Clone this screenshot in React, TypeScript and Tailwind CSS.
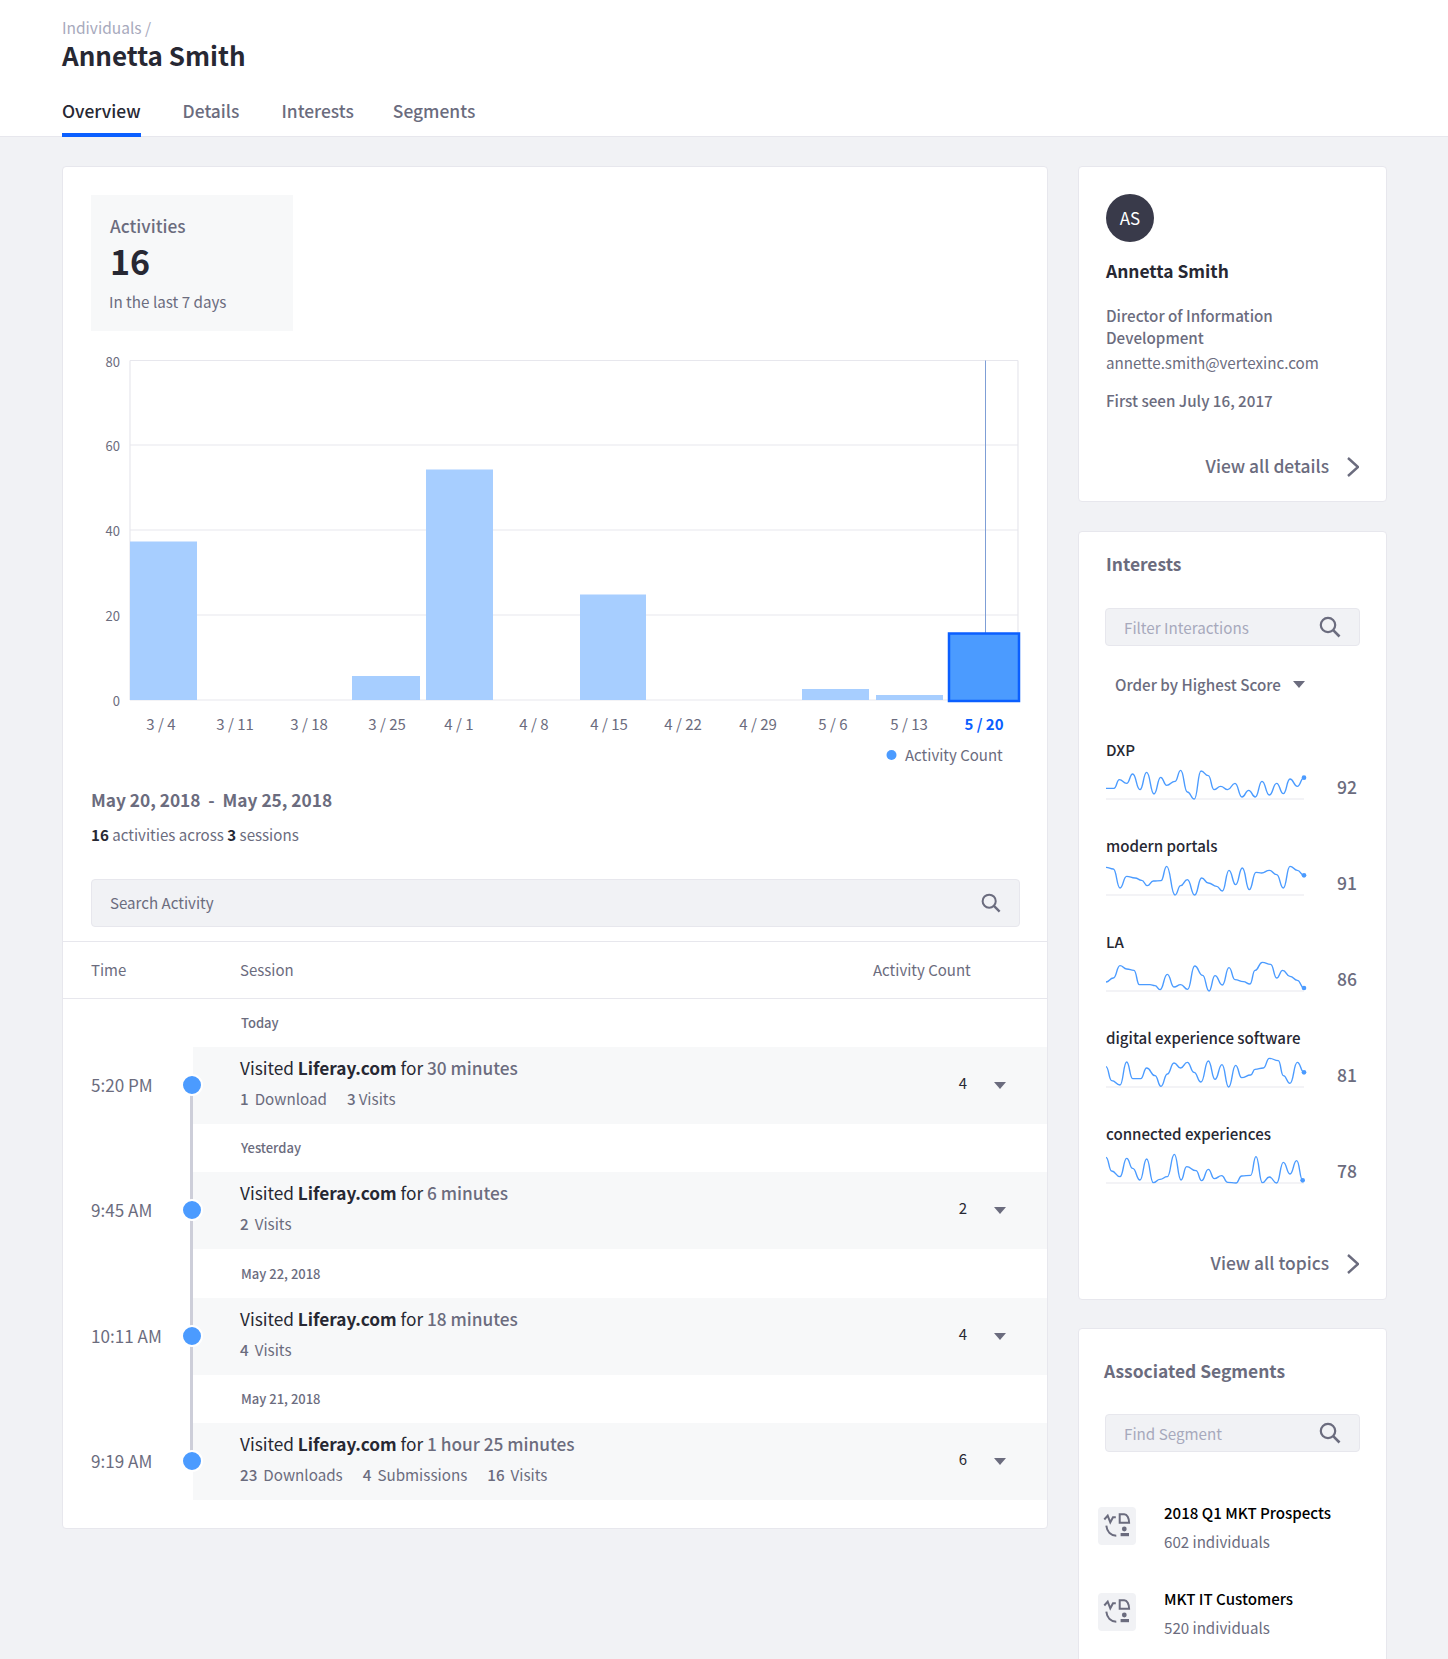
type Pt = [number, number];

const sparks: { name: string; score: number; base: number; points: Pt[] }[] = [
  {
    name: "DXP",
    score: 92,
    base: 778,
    points: [[138,746],[162,746],[178,720],[200,731],[218,703],[240,750],[260,698],[282,763],[302,713],[320,737],[345,725],[362,692],[382,757],[403,778],[423,694],[445,708],[462,750],[482,740],[503,750],[525,731],[546,772],[566,752],[586,772],[606,725],[628,766],[650,731],[670,762],[690,718],[712,740],[732,714]],
  },
  {
    name: "modern portals",
    score: 91,
    base: 196,
    points: [[138,113],[160,118],[180,175],[200,140],[225,145],[245,152],[262,168],[280,154],[303,153],[320,110],[345,196],[362,168],[382,150],[404,196],[425,145],[445,160],[470,170],[487,184],[507,122],[527,165],[547,115],[568,180],[588,128],[605,130],[628,122],[650,135],[670,175],[690,110],[712,122],[732,137]],
  },
  {
    name: "LA",
    score: 86,
    base: 484,
    points: [[138,457],[160,445],[180,408],[200,418],[222,422],[238,465],[270,465],[285,468],[300,480],[322,434],[342,472],[362,465],[383,479],[404,409],[428,437],[447,484],[465,438],[487,466],[507,414],[525,450],[550,456],[570,463],[585,422],[607,398],[632,404],[650,445],[668,422],[690,440],[712,452],[732,475]],
  },
  {
    name: "digital experience software",
    score: 81,
    base: 769,
    points: [[138,708],[155,750],[180,763],[200,694],[218,744],[242,744],[260,712],[285,735],[303,767],[322,730],[342,697],[362,712],[382,695],[402,725],[423,754],[445,691],[465,746],[486,702],[506,769],[527,704],[545,741],[572,733],[585,716],[610,712],[628,683],[655,690],[670,735],[690,758],[712,695],[732,725]],
  },
  {
    name: "connected experiences",
    score: 78,
    base: 219,
    points: [[138,142],[155,183],[180,200],[200,145],[218,175],[240,210],[260,147],[280,218],[300,208],[322,200],[343,133],[363,210],[380,170],[408,182],[425,212],[445,178],[463,206],[485,197],[503,217],[528,219],[545,198],[572,196],[588,140],[607,218],[628,201],[650,219],[670,157],[690,192],[710,152],[728,211]],
  },
];

const sessions = [
  { day: "Today", dayH: "h-[48px]", time: "5:20 PM", length: "30 minutes", count: 4, items: [["1", "Download", "ml-[6px]"], ["3", "Visits", "ml-[3px]"]] },
  { day: "Yesterday", dayH: "h-[48px]", time: "9:45 AM", length: "6 minutes", count: 2, items: [["2", "Visits", "ml-[6px]"]] },
  { day: "May 22, 2018", dayH: "h-[49px]", time: "10:11 AM", length: "18 minutes", count: 4, items: [["4", "Visits", "ml-[6px]"]] },
  { day: "May 21, 2018", dayH: "h-[48px]", time: "9:19 AM", length: "1 hour 25 minutes", count: 6, items: [["23", "Downloads", "ml-[6px]"], ["4", "Submissions", "ml-[6px]"], ["16", "Visits", "ml-[6px]"]] },
];

// chart coordinates are relative to the svg's top left corner (91, 331 on the page)
const gridY = [29.5, 114, 199, 284, 369];
const yLabels = ["80", "60", "40", "20", "0"];
const bars = [
  [39, 106, 210.5],
  [261, 329, 345],
  [335, 402, 138.5],
  [489, 555, 263.5],
  [711, 778, 358],
  [785, 852, 364],
];
const xLabels = [
  ["3 / 4", 70], ["3 / 11", 144], ["3 / 18", 218], ["3 / 25", 296], ["4 / 1", 368], ["4 / 8", 443],
  ["4 / 15", 518], ["4 / 22", 592], ["4 / 29", 667], ["5 / 6", 742], ["5 / 13", 818],
] as const;

function smooth(p: Pt[]) {
  let d = `M${p[0][0]} ${p[0][1]}`;
  for (let i = 0; i < p.length - 1; i++) {
    const b = p[i];
    const c = p[i + 1];
    const mid = (b[0] + c[0]) / 2;
    d += ` C${mid} ${b[1]} ${mid} ${c[1]} ${c[0]} ${c[1]}`;
  }
  return d;
}

function Spark({ points, base }: { points: Pt[]; base: number }) {
  const last = points[points.length - 1];
  return (
    <svg viewBox={`138 ${base - 93} 600 96`} className="w-[200px] h-[32px] overflow-visible">
      <line x1="138" y1={base} x2="732" y2={base} stroke="#e7e7ed" strokeWidth="3" />
      <path d={smooth(points)} fill="none" stroke="#4b9bff" strokeWidth="4.2" />
      <circle cx={last[0]} cy={last[1]} r="7" fill="#4b9bff" />
    </svg>
  );
}

function SearchIcon({ className }: { className: string }) {
  return (
    <svg viewBox="0 0 22 22" className={className} fill="none" stroke="#6b6c7e">
      <circle cx="9" cy="9" r="7.2" strokeWidth="2.2" />
      <line x1="14.2" y1="14.2" x2="20.5" y2="20.5" strokeWidth="2.6" />
    </svg>
  );
}

function Chevron() {
  return (
    <svg viewBox="0 0 12 20" className="w-[12px] h-[20px] mt-[2px]" fill="none" stroke="#6b6c7e" strokeWidth="2.4">
      <polyline points="1,1 11,10 1,19" />
    </svg>
  );
}

function Caret({ className = "" }: { className?: string }) {
  return (
    <svg viewBox="0 0 12 7" className={`w-[12px] h-[7px] ${className}`} fill="#6b6c7e">
      <polygon points="0,0 12,0 6,7" />
    </svg>
  );
}

function SegmentIcon() {
  return (
    <div className="w-[38px] h-[38px] shrink-0 mt-[5px] rounded-[4px] bg-[#f1f2f5]">
      <svg viewBox="0 0 38 38" className="w-[38px] h-[38px]" fill="none" stroke="#6b6c7e" strokeWidth="2">
        <polyline points="6.3,12.5 9.7,8.7 12.3,15.3 15,10.3 17.8,10.3" />
        <path d="M8.3 18.7C9 25 13 28.7 18.3 28.7" />
        <path d="M21.7 7.2h4.5c2.9 0 4.9 3.7 4.9 8.6h-9.4z" />
        <circle cx="26.3" cy="22" r="2.4" fill="#6b6c7e" stroke="none" />
        <rect x="22.6" y="26" width="8.4" height="3.2" fill="#6b6c7e" stroke="none" />
      </svg>
    </div>
  );
}

function SmallSearch({ placeholder }: { placeholder: string }) {
  return (
    <div className="-ml-px w-[255px] h-[38px] flex items-center justify-between pl-[18px] pr-[18px] rounded-[4px] bg-[#f1f2f5] border border-[#e7e7ed]">
      <span className="text-[15.2px] leading-[22px] text-[#a7a9bc]">{placeholder}</span>
      <SearchIcon className="w-[22px] h-[22px]" />
    </div>
  );
}

function ViewAll({ label, className }: { label: string; className: string }) {
  return (
    <div className={`flex items-center justify-end gap-[18px] ${className}`}>
      <span className="text-[17.4px] leading-[24px] font-medium text-[#6b6c7e]">{label}</span>
      <Chevron />
    </div>
  );
}

export default function App() {
  return (
    <div className="h-[1659px] overflow-hidden bg-[#f1f2f5] font-['Noto_Sans_CJK_SC','Liberation_Sans',sans-serif] text-[#272833]">
      {/* Header */}
      <div className="h-[137px] bg-white border-b border-[#e7e7ed] pl-[62px] pt-[17px]">
        <div className="text-[15.5px] leading-[20px] text-[#a7a9bc]">Individuals /</div>
        <h1 className="text-[26px] leading-[36px] font-semibold">Annetta Smith</h1>
        <div className="mt-[13px] flex text-[17.4px] leading-[24px] font-medium text-[#6b6c7e]">
          <div className="pt-[13px] pb-[10px] border-b-4 border-[#0b5fff] text-[#272833]">Overview</div>
          <div className="pt-[13px] ml-[42px]">Details</div>
          <div className="pt-[13px] ml-[42px]">Interests</div>
          <div className="pt-[13px] ml-[39px]">Segments</div>
        </div>
      </div>

      <div className="flex items-start gap-[30px] pl-[62px] pt-[29px]">
        {/* Main card */}
        <div className="w-[986px] shrink-0 bg-white border border-[#e7e7ed] rounded-[4px] pt-[28px] pb-[28px]">
          <div className="px-[28px]">
            <div className="w-[202px] h-[136px] bg-[#f7f8f9] pl-[19px] pt-[19px]">
              <div className="text-[17.3px] leading-[24px] font-medium text-[#6b6c7e]">Activities</div>
              <div className="text-[34px] leading-[44px] font-semibold mt-[1px]">16</div>
              <div className="text-[15.2px] leading-[22px] text-[#6b6c7e] -ml-[1px] mt-[7px]">In the last 7 days</div>
            </div>

            <svg width="928" height="439" className="block overflow-visible">
              {gridY.map((y) => (
                <line key={y} x1="39" x2="927" y1={y} y2={y} stroke="#e7e7ed" strokeWidth="1.2" />
              ))}
              <line x1="39" x2="39" y1="29.5" y2="369" stroke="#e7e7ed" strokeWidth="1.2" />
              <line x1="927" x2="927" y1="29.5" y2="369" stroke="#e7e7ed" strokeWidth="1.2" />
              {yLabels.map((t, i) => (
                <text key={t} x="29" y={gridY[i] + 6} textAnchor="end" fontSize="13" fill="#6b6c7e">{t}</text>
              ))}
              {bars.map(([a, b, top]) => (
                <rect key={a} x={a} y={top} width={b - a} height={369 - top} fill="#a7ceff" />
              ))}
              <line x1="894.5" x2="894.5" y1="29.5" y2="302" stroke="#7f9fd6" strokeWidth="1" />
              <rect x="858" y="302.5" width="70" height="67.5" fill="#4b9bff" stroke="#0b5fff" strokeWidth="2.5" />
              {xLabels.map(([t, x]) => (
                <text key={t} x={x} y="399" textAnchor="middle" fontSize="15" fill="#6b6c7e">{t}</text>
              ))}
              <text x="893" y="399" textAnchor="middle" fontSize="15" fontWeight="700" fill="#0b5fff">5 / 20</text>
              <circle cx="800.5" cy="424" r="5" fill="#4b9bff" />
              <text x="814" y="430" fontSize="15" fill="#6b6c7e">Activity Count</text>
            </svg>

            <div className="mt-[18px] text-[17.3px] leading-[24px] font-semibold text-[#6b6c7e] whitespace-pre">May 20, 2018  -  May 25, 2018</div>
            <div className="mt-[11px] text-[15.1px] leading-[22px] text-[#6b6c7e]">
              <span className="font-semibold text-[#272833]">16</span> activities across <span className="font-semibold text-[#272833]">3</span> sessions
            </div>

            <div className="mt-[34px] -mr-px h-[48px] flex items-center justify-between pl-[18px] pr-[18px] bg-[#f1f2f5] border border-[#e7e7ed] rounded-[4px]">
              <span className="text-[15.1px] leading-[22px] text-[#6b6c7e] -mt-[2px]">Search Activity</span>
              <SearchIcon className="w-[20px] h-[20px]" />
            </div>
          </div>

          {/* Table */}
          <div className="mt-[14px] h-[58px] flex items-center border-y border-[#e7e7ed] text-[15px] leading-[22px] text-[#6b6c7e]">
            <div className="w-[177px] pl-[28px]">Time</div>
            <div className="w-[633px]">Session</div>
            <div>Activity Count</div>
          </div>
          <div className="relative">
            <div className="absolute left-[127px] top-[86px] w-[3px] h-[376px] bg-[#cdced9]" />
            {sessions.map((s) => (
              <div key={s.day}>
                <div className={`${s.dayH} flex items-center pl-[178px] text-[13px] leading-[20px] font-medium text-[#6b6c7e]`}>{s.day}</div>
                <div className="relative h-[77px] flex">
                  <div className="w-[130px] shrink-0 pl-[28px] pb-[2px] flex items-center text-[17.1px] leading-[24px] text-[#6b6c7e]">{s.time}</div>
                  <div className="absolute left-[118px] top-[27px] w-[22px] h-[22px] rounded-full bg-[#4b9bff] border-2 border-white" />
                  <div className="flex-1 bg-[#f7f8f9] pl-[47px] pr-[41px] flex items-center justify-between">
                    <div className="pb-[6px]">
                      <div className="text-[17.25px] leading-[24px]">
                        Visited <span className="font-bold">Liferay.com</span> for <span className="font-medium text-[#6b6c7e]">{s.length}</span>
                      </div>
                      <div className="mt-[7px] flex gap-[20px] text-[15.2px] leading-[22px] text-[#6b6c7e]">
                        {s.items.map(([n, t, gap]) => (
                          <span key={t}>
                            <span className="font-medium">{n}</span>
                            <span className={gap}>{t}</span>
                          </span>
                        ))}
                      </div>
                    </div>
                    <div className="flex items-center gap-[27px]">
                      <span className="text-[15px] leading-[22px] -mt-[5px]">{s.count}</span>
                      <Caret />
                    </div>
                  </div>
                </div>
              </div>
            ))}
          </div>
        </div>

        {/* Right column */}
        <div className="w-[309px] shrink-0 flex flex-col">
          <div className="bg-white border border-[#e7e7ed] rounded-[4px] px-[27px] pt-[27px] pb-[23px] mb-[29px]">
            <div className="w-[48px] h-[48px] rounded-full bg-[#393a4a] flex items-center justify-center text-[17px] text-white">AS</div>
            <div className="mt-[17px] text-[17.4px] leading-[24px] font-bold">Annetta Smith</div>
            <div className="mt-[21px] text-[15.2px] leading-[22px] font-medium text-[#6b6c7e]">Director of Information Development</div>
            <div className="mt-[3px] text-[15.2px] leading-[22px] text-[#6b6c7e]">annette.smith@vertexinc.com</div>
            <div className="mt-[16px] text-[15.2px] leading-[22px] font-medium text-[#6b6c7e]">First seen July 16, 2017</div>
            <ViewAll label="View all details" className="mt-[43px]" />
          </div>

          <div className="bg-white border border-[#e7e7ed] rounded-[4px] px-[27px] pt-[20px] pb-[24px] mb-[28px]">
            <div className="text-[17.4px] leading-[24px] font-semibold text-[#6b6c7e]">Interests</div>
            <div className="mt-[32px]">
              <SmallSearch placeholder="Filter Interactions" />
            </div>
            <div className="mt-[27px] ml-[9px] flex items-center gap-[12px] text-[15.2px] leading-[22px] font-medium text-[#6b6c7e]">
              Order by Highest Score
              <Caret />
            </div>
            <div className="mt-[44px]">
              {sparks.map((s) => (
                <div key={s.name} className="h-[96px]">
                  <div className="text-[15.1px] leading-[20px] font-medium">{s.name}</div>
                  <div className="mt-[9px] flex items-center gap-[31px]">
                    <Spark points={s.points} base={s.base} />
                    <span className="mt-[5px] text-[17.5px] leading-[24px] font-medium text-[#6b6c7e]">{s.score}</span>
                  </div>
                </div>
              ))}
            </div>
            <ViewAll label="View all topics" className="mt-[32px]" />
          </div>

          <div className="bg-white border border-[#e7e7ed] rounded-[4px] px-[27px] pt-[30px]">
            <div className="-ml-[2px] text-[17.4px] leading-[24px] font-semibold text-[#6b6c7e]">Associated Segments</div>
            <div className="mt-[31px]">
              <SmallSearch placeholder="Find Segment" />
            </div>
            <div className="mt-[50px] -ml-[8px]">
              {[["2018 Q1 MKT Prospects", "602 individuals"], ["MKT IT Customers", "520 individuals"]].map(([name, sub]) => (
                <div key={name} className="h-[86px] flex gap-[28px]">
                  <SegmentIcon />
                  <div>
                    <div className="text-[15.1px] leading-[20px] font-medium text-black">{name}</div>
                    <div className="mt-[9px] text-[15.1px] leading-[20px] text-[#6b6c7e]">{sub}</div>
                  </div>
                </div>
              ))}
            </div>
          </div>
        </div>
      </div>
    </div>
  );
}
